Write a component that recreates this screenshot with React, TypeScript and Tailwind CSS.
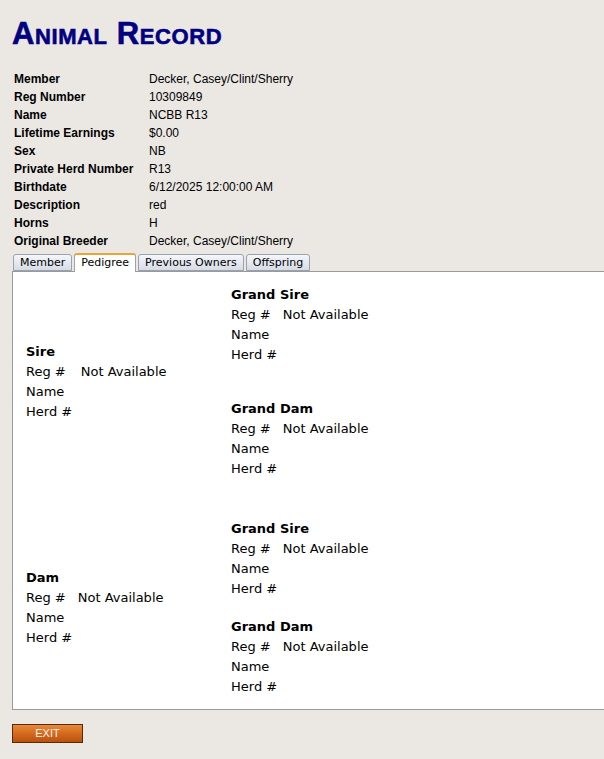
import React from "react";

const rows: [string, string][] = [
  ["Member", "Decker, Casey/Clint/Sherry"],
  ["Reg Number", "10309849"],
  ["Name", "NCBB R13"],
  ["Lifetime Earnings", "$0.00"],
  ["Sex", "NB"],
  ["Private Herd Number", "R13"],
  ["Birthdate", "6/12/2025 12:00:00 AM"],
  ["Description", "red"],
  ["Horns", "H"],
  ["Original Breeder", "Decker, Casey/Clint/Sherry"],
];

function Block({ title, cls, gap }: { title: string; cls: string; gap: string }) {
  return (
    <div className={cls}>
      <div className="font-bold leading-[20px]">{title}</div>
      <div className="leading-[20px]">
        Reg #<span className={gap}>Not Available</span>
      </div>
      <div className="leading-[20px]">Name</div>
      <div className="leading-[20px]">Herd #</div>
    </div>
  );
}

export default function App() {
  const tabs = ["Member", "Pedigree", "Previous Owners", "Offspring"];
  return (
    <div className="min-h-[759px] w-[604px] overflow-hidden bg-[#ebe8e4] text-black" style={{ fontFamily: '"Liberation Sans", Arial, sans-serif' }}>
      <div className="px-[12px] pt-[18px]">
        <h1 className="text-[31px] font-black leading-[32px] text-[#000080] tracking-[0.6px]" style={{ fontVariant: "small-caps", WebkitTextStroke: "0.6px #000080" }}>
          Animal Record
        </h1>
      </div>
      <div className="mt-[20px] pl-[14px] text-[12px]">
        {rows.map(([k, v]) => (
          <div key={k} className="flex h-[18px] items-center">
            <div className="w-[135px] font-bold">{k}</div>
            <div>{v}</div>
          </div>
        ))}
      </div>
      <div className="ml-[12px] mt-[3px]" style={{ fontFamily: '"DejaVu Sans", Verdana, sans-serif' }}>
        <div className="flex items-end gap-[2px] pl-[1px] text-[11px]">
          {tabs.map((t) =>
            t === "Pedigree" ? (
              <div key={t} className="relative -mb-px h-[19px] rounded-t-[3px] border border-b-0 border-[#9aa3ad] border-t-2 border-t-[#e8a33a] bg-white px-[6px] leading-[16px]">
                {t}
              </div>
            ) : (
              <div key={t} className="h-[17px] rounded-t-[3px] border border-[#9aa3ad] bg-gradient-to-b from-[#f4f6fa] to-[#d6dce6] px-[6px] leading-[15px]">
                {t}
              </div>
            )
          )}
        </div>
        <div className="flex border border-r-0 border-[#9a9a9a] bg-white text-[13px]">
          <div className="w-[218px] pl-[13px] pt-[70px]">
            <Block title="Sire" cls="" gap="ml-[15px]" />
            <Block title="Dam" cls="mt-[146px]" gap="ml-[12px]" />
          </div>
          <div className="pb-[12px] pt-[13px]">
            <Block title="Grand Sire" cls="" gap="ml-[12px]" />
            <Block title="Grand Dam" cls="mt-[34px]" gap="ml-[12px]" />
            <Block title="Grand Sire" cls="mt-[40px]" gap="ml-[12px]" />
            <Block title="Grand Dam" cls="mt-[18px]" gap="ml-[12px]" />
          </div>
        </div>
      </div>
      <div className="ml-[12px] mt-[10px]">
        <button className="h-[19px] w-[71px] border border-[#5a2a08] bg-gradient-to-b from-[#e8893a] via-[#d56a1c] to-[#b8520e] text-[11px] leading-[17px] text-[#f5f5f5]">
          EXIT
        </button>
      </div>
    </div>
  );
}
